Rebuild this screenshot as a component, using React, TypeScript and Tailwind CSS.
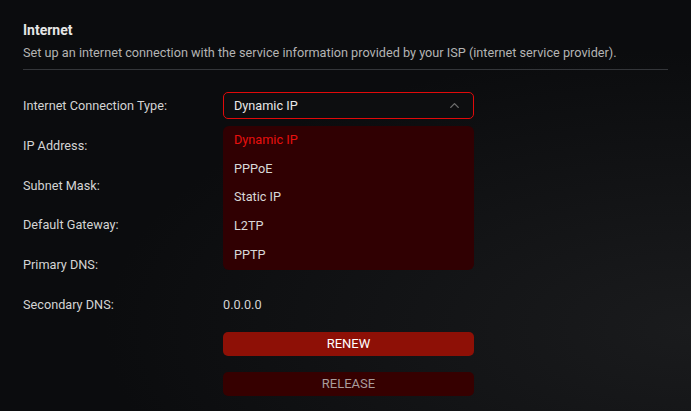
import { ChevronUp } from "lucide-react";

const rows = ["IP Address:", "Subnet Mask:", "Default Gateway:", "Primary DNS:", "Secondary DNS:"];
const options = ["Dynamic IP", "PPPoE", "Static IP", "L2TP", "PPTP"];

export default function App() {
    return (
        <div
            className="w-[691px] h-[411px] overflow-hidden bg-[#0b0c0e] bg-[radial-gradient(ellipse_at_100%_80%,#1a1b1d_0%,#0b0c0e_60%)] text-[12.7px] text-[#d4d4d4]"
            style={{ fontFamily: "Roboto, 'Liberation Sans', sans-serif" }}
        >
            <div className="px-[23px] pt-[20px]">
                <h2 className="text-[14px] font-bold text-[#e6e6e6] leading-5">Internet</h2>
                <p className="mt-[3px] text-[#b4b4b4] leading-5">
                    Set up an internet connection with the service information provided by your ISP (internet service provider).
                </p>
                <div className="mt-[6px] h-px bg-[#34363a]" />

                <div className="mt-[22px]">
                    <div className="flex items-center h-[27px]">
                        <span className="w-[200px]">Internet Connection Type:</span>
                        <div className="relative w-[251px]">
                            <div className="h-[27px] flex items-center justify-between pl-[10px] pr-[11px] border border-[#e00a0a] rounded-[5px] bg-[#0d0e10] text-[#e8e8e8]">
                                <span>Dynamic IP</span>
                                <ChevronUp size={15} strokeWidth={2.2} className="text-[#6f6f6f]" />
                            </div>
                            <ul className="absolute left-0 top-[34px] w-full z-10 rounded-[6px] bg-[#300002]">
                                {options.map((o, i) => (
                                    <li
                                        key={o}
                                        className={`h-[28.75px] pb-[2px] flex items-center pl-[11px] ${i === 0 ? "text-[#e8100e]" : "text-[#d8d8d8]"}`}
                                    >
                                        {o}
                                    </li>
                                ))}
                            </ul>
                        </div>
                    </div>

                    <div className="mt-[7px]">
                        {rows.map((r, i) => (
                            <div key={r} className="flex items-center h-[39.6px]">
                                <span className="w-[200px]">{r}</span>
                                {i === rows.length - 1 && <span>0.0.0.0</span>}
                            </div>
                        ))}
                    </div>

                    <div className="ml-[200px] w-[251px] mt-[8px] flex flex-col gap-[16px]">
                        <button className="h-[24px] rounded-[5px] bg-[#8e1006] text-white text-[13px]">RENEW</button>
                        <button className="h-[24px] rounded-[5px] bg-[#360000] text-[#a89c9c] text-[13px]">RELEASE</button>
                    </div>
                </div>
            </div>
        </div>
    );
}
